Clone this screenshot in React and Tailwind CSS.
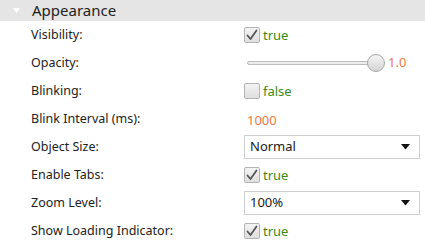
import React from "react";

const font = { fontFamily: '"Noto Sans", "Open Sans", sans-serif' };

function Check({ checked }) {
  return (
    <div className="w-[16px] h-[16px] rounded-[2px] border border-[#b4b4b4] bg-gradient-to-b from-[#f4f4f4] to-[#dedede] flex items-center justify-center">
      {checked && (
        <svg width="12" height="12" viewBox="0 0 12 12">
          <path d="M1.5 6.5 L4.5 10 L10.5 1.5" fill="none" stroke="#555" strokeWidth="1.8" strokeLinecap="round" strokeLinejoin="round" />
        </svg>
      )}
    </div>
  );
}

function BoolVal({ value }) {
  return (
    <div className="flex items-center gap-[3px]">
      <Check checked={value} />
      <span className="text-[13px] text-[#3c8a14] leading-none">{value ? "true" : "false"}</span>
    </div>
  );
}

function Select({ value }) {
  return (
    <div className="w-[176px] h-[24px] border border-[#cfcfcf] bg-white flex items-center justify-between pl-[5px] pr-[9px]">
      <span className="text-[13px] text-[#1a1a1a]">{value}</span>
      <svg width="9" height="6" viewBox="0 0 9 6"><path d="M0 0 H9 L4.5 5.5 Z" fill="#111" /></svg>
    </div>
  );
}

function Slider() {
  return (
    <div className="flex items-center">
      <div className="relative w-[143px] h-[18px] flex items-center">
        <div className="ml-[3px] w-[128px] h-[4px] rounded-full border border-[#bdbdbd] bg-[#ececec]" />
        <div className="absolute left-[123px] top-0 w-[18px] h-[18px] rounded-full border border-[#a6a6a6] bg-gradient-to-b from-[#f6f6f6] to-[#d4d4d4]" />
      </div>
      <span className="ml-[1px] text-[13px] text-[#f07745]">1.0</span>
    </div>
  );
}

function Row({ label, children }) {
  return (
    <div className="h-[28px] flex items-center">
      <div className="w-[244px] pl-[31px] text-[12.5px] text-[#222]">{label}</div>
      <div className="flex-1">{children}</div>
    </div>
  );
}

export default function App() {
  return (
    <div className="w-[425px] h-[240px] bg-white overflow-hidden" style={font}>
      <div className="h-[21px] bg-[#e5e5e5] flex items-center">
        <svg className="ml-[13px]" width="7" height="5" viewBox="0 0 7 5"><path d="M0 0 H7 L3.5 5 Z" fill="#fff" /></svg>
        <span className="ml-[12px] text-[15px] text-[#1e1e1e] leading-none">Appearance</span>
      </div>
      <Row label="Visibility:"><BoolVal value={true} /></Row>
      <Row label="Opacity:"><Slider /></Row>
      <Row label="Blinking:"><BoolVal value={false} /></Row>
      <Row label="Blink Interval (ms):"><span className="pl-[3px] text-[13px] text-[#f07745]">1000</span></Row>
      <Row label="Object Size:"><Select value="Normal" /></Row>
      <Row label="Enable Tabs:"><BoolVal value={true} /></Row>
      <Row label="Zoom Level:"><Select value="100%" /></Row>
      <Row label="Show Loading Indicator:"><BoolVal value={true} /></Row>
    </div>
  );
}
